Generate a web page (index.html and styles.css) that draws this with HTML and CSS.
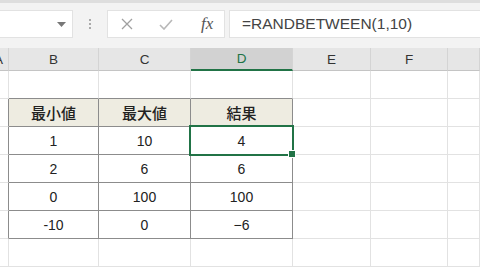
FILE: index.html
```html
<!DOCTYPE html>
<html lang="ja">
<head>
  <meta charset="UTF-8" />
  <title>RANDBETWEEN</title>
  <link rel="stylesheet" href="styles.css">
</head>
<body>
  <div class="toolbar">
    <div class="namebox">
      <svg class="arrow" width="9" height="5" viewBox="0 0 9 5"><path d="M0 0h9L4.5 5z" fill="#777"/></svg>
    </div>
    <div class="dots"><span></span><span></span><span></span></div>
    <div class="fxbox">
      <svg class="ico" width="12" height="12" viewBox="0 0 12 12"><path d="M1 1l10 10M11 1L1 11" stroke="#a0a0a0" stroke-width="1.3" fill="none"/></svg>
      <svg class="ico" width="14" height="11" viewBox="0 0 14 11"><path d="M1 6l4 4 8-9" stroke="#b8b8b8" stroke-width="1.6" fill="none"/></svg>
      <span class="fx">fx</span>
    </div>
    <div class="formula">=RANDBETWEEN(1,10)</div>
  </div>

  <div class="sheet">
    <div class="hd"><span class="clip">A</span></div>
    <div class="hd">B</div>
    <div class="hd">C</div>
    <div class="hd sel">D</div>
    <div class="hd">E</div>
    <div class="hd">F</div>
    <div class="hd"></div>

    <div class="c"></div><div class="c tb"></div><div class="c tb"></div><div class="c tb"></div><div class="c"></div><div class="c"></div><div class="c"></div>

    <div class="c tl"></div><div class="c t th">最小値</div><div class="c t th">最大値</div><div class="c t th">結果</div><div class="c"></div><div class="c"></div><div class="c"></div>

    <div class="c tl"></div><div class="c t">1</div><div class="c t">10</div><div class="c t active">4</div><div class="c"></div><div class="c"></div><div class="c"></div>

    <div class="c tl"></div><div class="c t">2</div><div class="c t">6</div><div class="c t">6</div><div class="c"></div><div class="c"></div><div class="c"></div>

    <div class="c tl"></div><div class="c t">0</div><div class="c t">100</div><div class="c t">100</div><div class="c"></div><div class="c"></div><div class="c"></div>

    <div class="c tl"></div><div class="c t">-10</div><div class="c t">0</div><div class="c t">−6</div><div class="c"></div><div class="c"></div><div class="c"></div>

    <div class="c"></div><div class="c"></div><div class="c"></div><div class="c"></div><div class="c"></div><div class="c"></div><div class="c"></div>
  </div>
</body>
</html>
```

FILE: styles.css
```css
* {
  box-sizing: border-box;
}
body {
  margin: 0;
  width: 480px;
  height: 270px;
  overflow: hidden;
  font-family: 'Liberation Sans', 'Noto Sans CJK JP', sans-serif;
  background: #fff;
}

.toolbar {
  height: 48px;
  background: #f3f3f3;
  border-top: 3px solid #dedede;
  display: flex;
  align-items: flex-start;
  padding-top: 7px;
}

.namebox {
  width: 73px;
  height: 28px;
  background: #fff;
  border: 1px solid #e2e2e2;
  border-left: none;
  display: flex;
  align-items: center;
  justify-content: flex-end;
  padding-right: 6px;
}

.dots {
  width: 34px;
  height: 28px;
  display: flex;
  flex-direction: column;
  align-items: center;
  justify-content: center;
  gap: 2px;
}
.dots span {
  width: 2px;
  height: 2px;
  background: #aaa;
}

.fxbox {
  width: 118px;
  height: 28px;
  background: #fff;
  border: 1px solid #e2e2e2;
  display: flex;
  align-items: center;
  padding-left: 13px;
  gap: 26px;
}
.fx {
  font-family: 'Liberation Serif', serif;
  font-style: italic;
  font-size: 17px;
  color: #555;
  margin-left: 2px;
}

.formula {
  flex: 1;
  margin-left: 4px;
  height: 28px;
  background: #fff;
  border: 1px solid #e2e2e2;
  border-right: none;
  font-size: 15.5px;
  color: #444;
  line-height: 26px;
  padding-left: 12px;
}

.sheet {
  display: grid;
  grid-template-columns: 9px 90px 92px 102px 78px 77px 1fr;
  grid-template-rows: 23px repeat(7, 28px);
  height: 222px;
  overflow: hidden;
}

.hd {
  background: #e6e6e6;
  border-right: 1px solid #d4d4d4;
  border-bottom: 1px solid #c4c4c4;
  font-size: 13.5px;
  color: #333;
  display: flex;
  align-items: center;
  justify-content: center;
  overflow: hidden;
}
.hd .clip {
  margin-left: -11px;
}
.hd.sel {
  background: #d2d2d2;
  color: #217346;
  border-bottom: 2px solid #217346;
}

.c {
  border-right: 1px solid #e2e2e2;
  border-bottom: 1px solid #e2e2e2;
  display: flex;
  align-items: center;
  justify-content: center;
  font-size: 14px;
  color: #222;
}
.c.tb {
  border-bottom-color: #8c8c8c;
}
.c.tl {
  border-right-color: #8c8c8c;
}
.c.t {
  border-right-color: #8c8c8c;
  border-bottom-color: #8c8c8c;
}
.c.th {
  background: #eeece1;
  font-family: 'Noto Sans CJK JP', sans-serif;
  font-size: 15px;
  font-weight: 500;
}
.c.active {
  position: relative;
}
.c.active::before {
  content: '';
  position: absolute;
  left: -2px;
  top: -2px;
  right: -2px;
  bottom: -2px;
  border: 2px solid #217346;
}
.c.active::after {
  content: '';
  position: absolute;
  right: -4px;
  bottom: -4px;
  width: 6px;
  height: 6px;
  background: #217346;
  border: 1px solid #fff;
}
```
